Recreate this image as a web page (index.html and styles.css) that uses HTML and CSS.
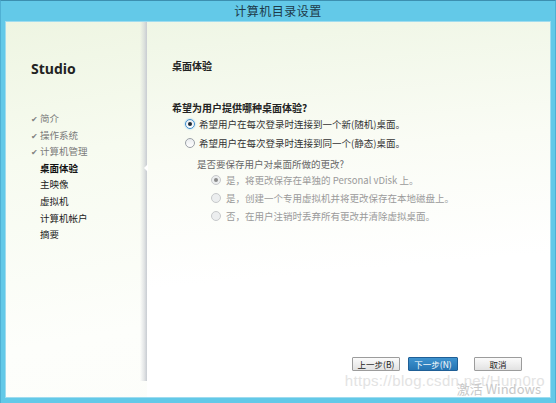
FILE: index.html
```html
<!DOCTYPE html>
<html lang="zh">
<head>
<meta charset="utf-8">
<link rel="stylesheet" href="styles.css">
</head>
<body>
<div class="window">
  <div class="titlebar">计算机目录设置</div>
  <div class="client">
    <div class="side">
      <div class="brand">Studio</div>
      <ul class="steps">
        <li class="done"><span class="chk">✔</span>简介</li>
        <li class="done"><span class="chk">✔</span>操作系统</li>
        <li class="done"><span class="chk">✔</span>计算机管理</li>
        <li class="current">桌面体验</li>
        <li>主映像</li>
        <li>虚拟机</li>
        <li>计算机帐户</li>
        <li>摘要</li>
      </ul>
      <span class="notch"></span>
    </div>
    <div class="main">
      <div class="page-title">桌面体验</div>
      <div class="question">希望为用户提供哪种桌面体验?</div>
      <div class="opts">
        <div class="opt"><span class="radio on"></span>希望用户在每次登录时连接到一个新(随机)桌面。</div>
        <div class="opt"><span class="radio"></span>希望用户在每次登录时连接到同一个(静态)桌面。</div>
      </div>
      <div class="sub">
        <div class="subq">是否要保存用户对桌面所做的更改?</div>
        <div class="subopts">
          <div class="opt dis"><span class="radio on"></span>是，将更改保存在单独的 Personal vDisk 上。</div>
          <div class="opt dis"><span class="radio"></span>是，创建一个专用虚拟机并将更改保存在本地磁盘上。</div>
          <div class="opt dis"><span class="radio"></span>否，在用户注销时丢弃所有更改并清除虚拟桌面。</div>
        </div>
      </div>
      <div class="spacer"></div>
      <div class="buttons">
        <button class="btn">上一步(B)</button>
        <button class="btn primary">下一步(N)</button>
        <button class="btn cancel">取消</button>
      </div>
      <div class="wm">https://blog.csdn.net/Hum0ro</div>
      <div class="act">激活 Windows</div>
    </div>
  </div>
</div>
</body>
</html>
```
FILE: styles.css
```css
* { box-sizing: border-box; }
html, body { margin: 0; padding: 0; }
body {
  width: 556px; height: 403px; overflow: hidden;
  font-family: "Noto Sans CJK SC", "Noto Sans", sans-serif;
  background: #62c9e8;
}
.window {
  width: 556px; height: 403px;
  background: #63c9e8;
  border-top: 1px solid #3c8fb0;
  border-left: 1px solid #4fb0d3;
  border-right: 1px solid #4fb0d3;
  display: flex; flex-direction: column;
  padding: 0 4px 5px 4px;
}
.titlebar {
  height: 20px;
  text-align: center;
  font-size: 12px;
  line-height: 20px;
  color: #1d3a48;
  letter-spacing: 0.5px;
}
.client {
  flex: 1;
  display: flex;
  border: 1px solid #9fdcef;
  background: linear-gradient(170deg, #eef5e2 0%, #f7fbf0 30%, #fdfefb 70%, #fcfdf9 100%);
  overflow: hidden;
}
.side {
  width: 141px;
  position: relative;
  padding: 37px 0 0 25px;
  margin-bottom: 16px;
}
.side::after {
  content: ""; position: absolute; right: 0; top: 0; bottom: 0; width: 7px;
  background: linear-gradient(90deg, rgba(200,204,210,0) 0%, rgba(200,204,210,0.5) 60%, #c8ccd2 100%);
}
.brand {
  font-family: "Open Sans", "Noto Sans", sans-serif;
  font-weight: 700;
  font-size: 14px;
  color: #222;
  line-height: 20px;
}
.steps {
  list-style: none; margin: 31px 0 0 0; padding: 0;
  font-size: 9.5px;
  color: #222;
}
.steps li {
  height: 16.6px; line-height: 16.6px;
  padding-left: 9px;
  position: relative;
}
.steps li.done { color: #7a7a7a; padding-left: 0; }
.steps .chk { display: inline-block; width: 9px; font-size: 8px; color: #808080; }
.steps li.current { font-weight: 700; color: #111; }
.notch {
  position: absolute; right: -1px; top: 142px;
  width: 0; height: 0; z-index: 2;
  border-top: 4px solid transparent;
  border-bottom: 4px solid transparent;
  border-right: 4px solid #ffffff;
}
.main {
  flex: 1;
  display: flex; flex-direction: column;
  padding: 37px 28px 0 25px;
  position: relative;
  background: linear-gradient(175deg, #eff6e5 0%, #fafcf5 35%, #ffffff 65%);
}
.page-title { font-size: 10px; font-weight: 700; color: #222; line-height: 14px; }
.question { margin-top: 28px; font-size: 10px; font-weight: 700; color: #222; line-height: 14px; }
.opts { padding-left: 13px; margin-top: -1px; }
.opt {
  display: flex; align-items: center;
  font-size: 9.5px; color: #333;
  height: 19px;
}
.radio {
  width: 10px; height: 10px; border-radius: 50%;
  border: 1px solid #9aa0a6;
  background: linear-gradient(#e9ecef, #ffffff);
  margin-right: 4px;
  position: relative;
  flex: none;
}
.radio.on::after {
  content: ""; position: absolute; left: 2px; top: 2px;
  width: 4px; height: 4px; border-radius: 50%; background: #1d2a35;
}
.opts .radio.on { border-color: #3f8fd0; box-shadow: 0 0 2px #8cc6f0; }
.sub { padding-left: 25px; margin-top: 5px; }
.subq { font-size: 9.5px; color: #666; line-height: 14px; }
.subopts { padding-left: 14px; margin-top: 0; }
.opt.dis { color: #9a9a9a; height: 18px; }
.opt.dis .radio { border-color: #c7c9cb; background: #eceeef; margin-right: 5px; }
.opt.dis .radio.on::after { background: #8a8a8a; }
.spacer { flex: 1; }
.buttons {
  display: flex; justify-content: flex-end; gap: 8px;
  margin-bottom: 26px;
}
.btn {
  width: 48px; height: 14px;
  font-family: "Noto Sans CJK SC", sans-serif;
  font-size: 8.5px; line-height: 12px; padding: 0;
  color: #222;
  background: linear-gradient(#fbfbfb, #e2e2e2);
  border: 1px solid #9c9c9c;
  border-radius: 1px;
}
.btn.primary {
  width: 50px;
  color: #fff;
  background: linear-gradient(#3e93cf, #2675b3);
  border-color: #1f5f96;
}
.btn.cancel { margin-left: 8px; }
.wm {
  position: absolute; right: 5px; bottom: 9px;
  font-family: "Liberation Sans", Arial, sans-serif;
  font-size: 15px; line-height: 15px; color: #e3e3e3; letter-spacing: 0.3px;
}
.act {
  position: absolute; right: 9px; bottom: 1px;
  font-family: "Noto Sans CJK SC", sans-serif;
  font-size: 13px; line-height: 14px; color: #c8c8c8;
}
```
